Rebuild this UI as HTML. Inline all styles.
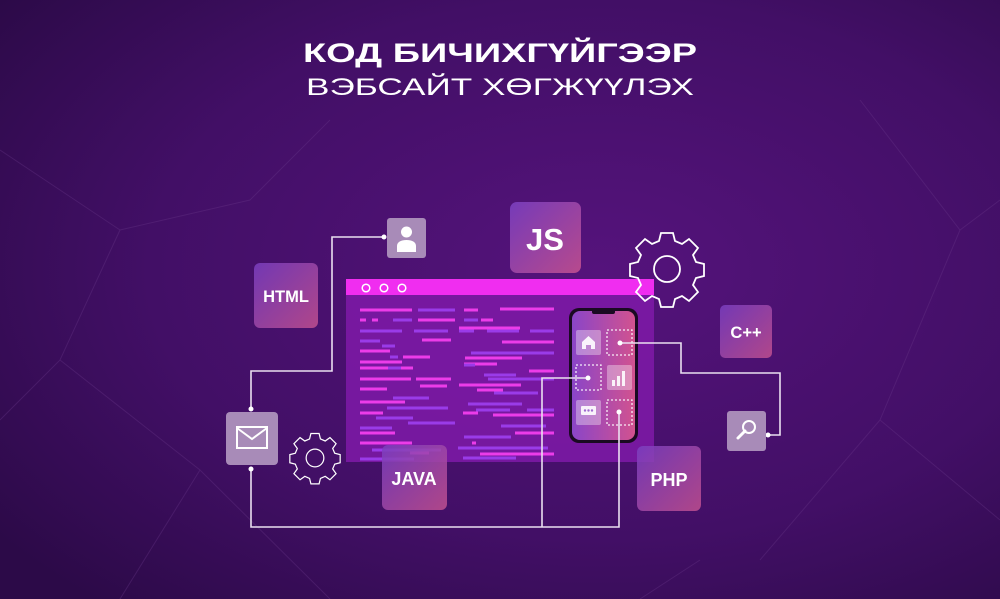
<!DOCTYPE html>
<html><head><meta charset="utf-8"><style>
html,body{margin:0;padding:0;width:1000px;height:599px;overflow:hidden;background:#3a0d5c}
</style></head><body>
<svg width="1000" height="599" viewBox="0 0 1000 599" xmlns="http://www.w3.org/2000/svg" font-family="Liberation Sans, DejaVu Sans, sans-serif">
<defs>
<radialGradient id="bg" cx="0.6" cy="0.45" r="0.75">
<stop offset="0" stop-color="#55137c"/><stop offset="0.6" stop-color="#420f66"/><stop offset="1" stop-color="#2c0a48"/>
</radialGradient>
<linearGradient id="card" x1="0" y1="0" x2="1" y2="1">
<stop offset="0" stop-color="#7a3fc0"/><stop offset="1" stop-color="#c2508f"/>
</linearGradient>
<linearGradient id="phone" x1="0" y1="0" x2="1" y2="0">
<stop offset="0" stop-color="#8a45c8"/><stop offset="1" stop-color="#d2528f"/>
</linearGradient>
</defs>
<rect width="1000" height="599" fill="url(#bg)"/>
<g stroke="#6a3a8a" stroke-width="1" opacity="0.35" fill="none">
<path d="M0 150 L120 230 L60 360 L0 420 M120 230 L250 200 L330 120 M60 360 L200 470 L120 599 M860 100 L960 230 L1000 200 M960 230 L880 420 L1000 520 M880 420 L760 560 M200 470 L330 599 M700 560 L640 599"/>
</g>
<text x="500" y="62" text-anchor="middle" font-size="27" font-weight="bold" fill="#fff" textLength="394" lengthAdjust="spacingAndGlyphs">КОД БИЧИХГҮЙГЭЭР</text>
<text x="500" y="95" text-anchor="middle" font-size="24.5" fill="#fff" textLength="388" lengthAdjust="spacingAndGlyphs">ВЭБСАЙТ ХӨГЖҮҮЛЭХ</text>

<!-- browser window -->
<rect x="346" y="279" width="308" height="183" fill="#7f1aa8" opacity="0.85"/>
<rect x="346" y="279" width="308" height="16" fill="#f02df0"/>
<g fill="none" stroke="#fff" stroke-width="1.5">
<circle cx="366" cy="288" r="3.8"/><circle cx="384" cy="288" r="3.8"/><circle cx="402" cy="288" r="3.8"/>
</g>
<g stroke-width="3">
<g stroke="#ec3ce9">
<path d="M360 310H412M360 320H366M372 320H378M418 320H455M360 351H390M422 340H451M403 357H430M360 362H402M360 368H413M360 379H411M416 379H451M360 389H387M360 402H405M420 386H447M360 413H383M360 433H395M360 443H412M410 453H429"/>
<path d="M464 310H478M500 309H554M481 320H493M459 328H520M502 342H554M464 364H497M529 371H554M459 385H521M477 390H503M463 413H478M493 415H554M514 426H523M515 433H554M472 443H476M480 454H554M465 358H522"/>
</g>
<g stroke="#9a3be8">
<path d="M418 310H455M393 320H412M360 331H402M414 331H448M360 341H380M369 388M382 346H395M390 357H398M360 386M388 368H401M393 398H429M387 408H448M376 418H413M408 423H455M360 428H392M372 450H441M360 459H414"/>
<path d="M464 320H478M459 331H474M487 331H519M530 331H554M471 353H504M498 353H554M464 365H475M484 375H516M488 379H554M494 393H538M468 404H522M476 410H510M527 410H554M501 426H546M464 437H511M463 458H516M458 448H548M522 448H535"/>
</g>
</g>
<!-- phone -->
<rect x="569" y="308" width="69" height="135" rx="10" fill="#1a0a22"/>
<rect x="572" y="311" width="63" height="129" rx="8" fill="url(#phone)"/>
<rect x="592" y="309" width="23" height="5" rx="2" fill="#1a0a22"/>
<g fill="#ffffff" opacity="0.35">
<rect x="576" y="330" width="25" height="25" rx="2"/><rect x="607" y="365" width="25" height="25" rx="2"/><rect x="576" y="400" width="25" height="25" rx="2"/>
</g>
<path d="M582 342l6.5-6 6.5 6v7h-4v-4h-5v4h-4z" fill="#fff" opacity="0.9"/>
<g fill="#fff" opacity="0.9"><rect x="612" y="380" width="3" height="6"/><rect x="617" y="376" width="3" height="10"/><rect x="622" y="371" width="3" height="15"/></g>
<rect x="581" y="406" width="15" height="9" rx="1" fill="#fff" opacity="0.9"/>
<g fill="#a06bd0"><circle cx="585" cy="410.5" r="1.2"/><circle cx="588.5" cy="410.5" r="1.2"/><circle cx="592" cy="410.5" r="1.2"/></g>
<g fill="none" stroke="#fff" stroke-width="1.3" stroke-dasharray="2 2" opacity="0.9">
<rect x="607" y="330" width="25" height="25"/><rect x="576" y="365" width="25" height="25"/><rect x="607" y="400" width="25" height="25"/>
</g>

<!-- connector lines -->
<g fill="none" stroke="#eadff0" stroke-width="1.6">
<path d="M251 409V371H332V237H384"/>
<path d="M251 469V527H619V413"/>
<path d="M542 527V378H588"/>
<path d="M620 343H681V373H780V435H768"/>
</g>
<g fill="#fff"><circle cx="384" cy="237" r="2.5"/><circle cx="251" cy="409" r="2.5"/><circle cx="251" cy="469" r="2.5"/><circle cx="588" cy="378" r="2.5"/><circle cx="620" cy="343" r="2.5"/><circle cx="619" cy="412" r="2.5"/><circle cx="768" cy="435" r="2.5"/></g>

<!-- cards -->
<rect x="254" y="263" width="64" height="65" rx="6" fill="url(#card)" opacity="0.85"/>
<text x="286" y="302" text-anchor="middle" font-size="16.5" font-weight="bold" fill="#fff">HTML</text>
<rect x="510" y="202" width="71" height="71" rx="7" fill="url(#card)" opacity="0.9"/>
<text x="545" y="250" text-anchor="middle" font-size="31" font-weight="bold" fill="#fff">JS</text>
<rect x="720" y="305" width="52" height="53" rx="5" fill="url(#card)" opacity="0.85"/>
<text x="746" y="338" text-anchor="middle" font-size="16.5" font-weight="bold" fill="#fff">C++</text>
<rect x="382" y="445" width="65" height="65" rx="6" fill="url(#card)" opacity="0.85"/>
<text x="414" y="485" text-anchor="middle" font-size="18" font-weight="bold" fill="#fff">JAVA</text>
<rect x="637" y="446" width="64" height="65" rx="6" fill="url(#card)" opacity="0.85"/>
<text x="669" y="486" text-anchor="middle" font-size="18" font-weight="bold" fill="#fff">PHP</text>

<rect x="387" y="218" width="39" height="40" rx="3" fill="#a88bb8"/>
<circle cx="406.5" cy="232" r="5.5" fill="#fff"/><path d="M397 252v-6c0-4 4-6 9.5-6s9.5 2 9.5 6v6z" fill="#fff"/>
<rect x="226" y="412" width="52" height="53" rx="4" fill="#a88bb8"/>
<rect x="237" y="427" width="30" height="21" fill="none" stroke="#fff" stroke-width="2"/><path d="M237 428l15 11 15-11" fill="none" stroke="#fff" stroke-width="2"/>
<rect x="727" y="411" width="39" height="40" rx="3" fill="#a88bb8"/>
<circle cx="749" cy="427" r="6" fill="none" stroke="#fff" stroke-width="2"/><path d="M745 431l-7 7" stroke="#fff" stroke-width="3" stroke-linecap="round"/>

<!-- gears -->
<g fill="none" stroke="#fff" stroke-width="1.8">
<g transform="translate(667 269)">
<circle r="13"/>
<path d="M-6-36h12l2 8 7 3 7-5 9 9-5 7 3 7 8 2v12l-8 2-3 7 5 7-9 9-7-5-7 3-2 8h-12l-2-8-7-3-7 5-9-9 5-7-3-7-8-2v-12l8-2 3-7-5-7 9-9 7 5 7-3z"/>
</g>
<g transform="translate(315 458) scale(0.68)">
<circle r="13"/>
<path d="M-6-36h12l2 8 7 3 7-5 9 9-5 7 3 7 8 2v12l-8 2-3 7 5 7-9 9-7-5-7 3-2 8h-12l-2-8-7-3-7 5-9-9 5-7-3-7-8-2v-12l8-2 3-7-5-7 9-9 7 5 7-3z"/>
</g>
</g>
</svg>
</body></html>
